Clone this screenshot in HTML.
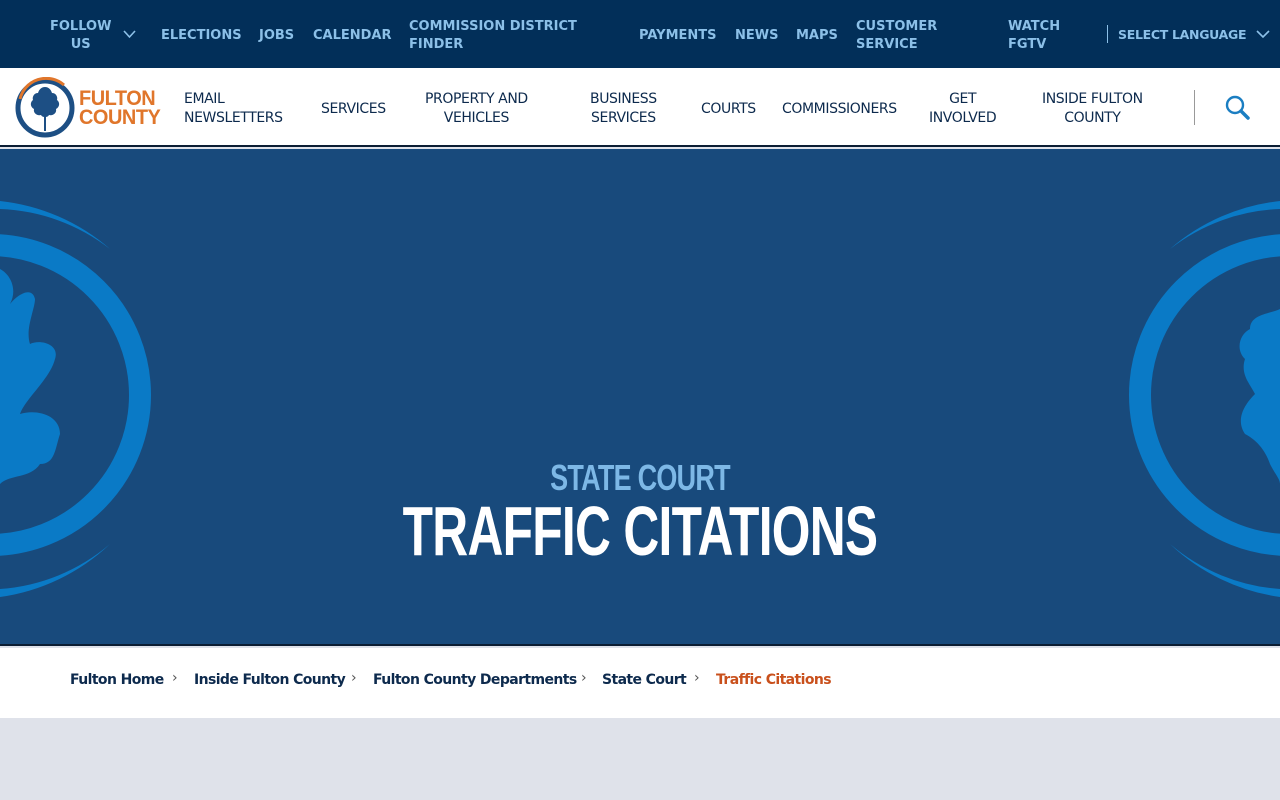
<!DOCTYPE html>
<html><head><meta charset="utf-8"><style>
*{margin:0;padding:0;box-sizing:border-box}
body{width:1280px;height:800px;overflow:hidden;background:#dfe2ea;font-family:"DejaVu Sans","Liberation Sans",sans-serif;position:relative}
.top{position:absolute;left:0;top:0;width:1280px;height:68px;background:#022f59}
.t{position:absolute;color:#8cc0e8;font-weight:bold;font-size:13px;letter-spacing:0;line-height:18px;margin-top:2px}
.nav{position:absolute;left:0;top:68px;width:1280px;height:79px;background:#fff;border-bottom:2px solid #0b1d33}
.n{position:absolute;color:#0d2a4d;font-size:14px;line-height:19px;text-align:center;letter-spacing:-.4px;margin-top:2px}
.hero{position:absolute;left:0;top:149px;width:1280px;height:497px;background:#184a7c;overflow:hidden;border-bottom:2px solid #0b1d33}
.bc{position:absolute;left:0;top:648px;width:1280px;height:70px;background:#fff}
.b{position:absolute;top:672px;font-size:14px;font-weight:bold;color:#0d2a4d;letter-spacing:-.6px}
.s{position:absolute;top:670px;color:#555;font-size:14px}
.h{position:absolute;left:0;width:1280px;text-align:center;font-family:"Liberation Sans",sans-serif;font-weight:bold}
</style></head><body>
<div class="top"></div>
<div class="t" style="left:50px;top:16px;text-align:center">FOLLOW<br>US</div>
<svg style="position:absolute;left:123px;top:30px" width="13" height="9"><path d="M1 1l5.5 6L12 1" stroke="#8cc0e8" stroke-width="1.6" fill="none"/></svg>
<div class="t" style="left:161px;top:25px">ELECTIONS</div>
<div class="t" style="left:259px;top:25px">JOBS</div>
<div class="t" style="left:313px;top:25px">CALENDAR</div>
<div class="t" style="left:409px;top:16px">COMMISSION DISTRICT<br>FINDER</div>
<div class="t" style="left:639px;top:25px">PAYMENTS</div>
<div class="t" style="left:735px;top:25px">NEWS</div>
<div class="t" style="left:796px;top:25px">MAPS</div>
<div class="t" style="left:856px;top:16px">CUSTOMER<br>SERVICE</div>
<div class="t" style="left:1008px;top:16px">WATCH<br>FGTV</div>
<div style="position:absolute;left:1107px;top:25px;width:1px;height:18px;background:#8cc0e8"></div>
<div class="t" style="left:1118px;top:24px;font-size:12.5px;letter-spacing:-.3px">SELECT LANGUAGE</div>
<svg style="position:absolute;left:1256px;top:30px" width="14" height="9"><path d="M1 1l6 6 6-6" stroke="#8cc0e8" stroke-width="1.6" fill="none"/></svg>

<div class="nav"></div>
<svg style="position:absolute;left:14px;top:77px" width="62" height="62" viewBox="0 0 62 62">
<circle cx="31" cy="31" r="27" fill="none" stroke="#1d4f84" stroke-width="5"/>
<path d="M6 22A27 27 0 0 1 50 8" stroke="#e0762b" stroke-width="3" fill="none"/>
<path d="M31 10c-4 0-6 3-7 6-4 0-6 4-5 7-3 2-3 7 1 9-1 4 3 7 7 6 1 2 3 2 4 2s3 0 4-2c4 1 8-2 7-6 4-2 4-7 1-9 1-3-1-7-5-7-1-3-3-6-7-6z" fill="#1d4f84"/>
<rect x="30" y="38" width="2" height="16" fill="#1d4f84"/>
</svg>
<div style="position:absolute;left:79px;top:89px;color:#e0762b;font-family:'Liberation Sans',sans-serif;font-weight:bold;font-size:21px;line-height:19px;letter-spacing:-.5px;transform:scaleX(.95);transform-origin:left">FULTON<br>COUNTY</div>
<div class="n" style="left:184px;top:88px;text-align:left">EMAIL<br>NEWSLETTERS</div>
<div class="n" style="left:321px;top:98px">SERVICES</div>
<div class="n" style="left:425px;top:88px">PROPERTY AND<br>VEHICLES</div>
<div class="n" style="left:590px;top:88px">BUSINESS<br>SERVICES</div>
<div class="n" style="left:701px;top:98px">COURTS</div>
<div class="n" style="left:782px;top:98px">COMMISSIONERS</div>
<div class="n" style="left:929px;top:88px">GET<br>INVOLVED</div>
<div class="n" style="left:1042px;top:88px">INSIDE FULTON<br>COUNTY</div>
<div style="position:absolute;left:1194px;top:90px;width:1px;height:35px;background:#999"></div>
<svg style="position:absolute;left:1225px;top:95px" width="26" height="26"><circle cx="10" cy="10" r="8" stroke="#1b7ec2" stroke-width="2.4" fill="none"/><path d="M16 16l7 7" stroke="#1b7ec2" stroke-width="3.5" stroke-linecap="round"/></svg>

<div class="hero">
<svg width="1280" height="497" style="position:absolute;left:0;top:0">
<g fill="#0a7ac6">
<circle cx="-10" cy="246" r="150" fill="none" stroke="#0a7ac6" stroke-width="22"/>
<path d="M0 52A200 200 0 0 1 110 100A190 190 0 0 0 0 60z"/>
<path d="M0 440A190 190 0 0 0 110 395A200 200 0 0 1 0 448z"/>
<path d="M0 120c10 5 18 20 10 35 8-10 22-18 25-5 0 10-10 30-5 45 10-5 30 0 25 15-5 20-30 40-35 55 15-5 40 0 40 20-5 15-5 30-20 30-10 15-30 10-40 20z"/>
<circle cx="1290" cy="246" r="150" fill="none" stroke="#0a7ac6" stroke-width="22"/>
<path d="M1280 52A200 200 0 0 0 1170 100A190 190 0 0 1 1280 60z"/>
<path d="M1280 440A190 190 0 0 1 1170 395A200 200 0 0 0 1280 448z"/>
<path d="M1280 160c-10 5-30 5-30 20-10 5-15 20-5 30-5 15 5 25 10 35-10 10-20 25-10 40 10 5 20 15 25 30 5 10 10 15 10 20z"/>
</g>
</svg>
</div>
<div class="h" style="top:457px;color:#7db8e6;font-size:36px;letter-spacing:-1px;transform:scaleX(.75)">STATE COURT</div>
<div class="h" style="top:491px;color:#fff;font-size:70px;letter-spacing:-1px;transform:scaleX(.71)">TRAFFIC CITATIONS</div>

<div class="bc"></div>
<div class="b" style="left:70px">Fulton Home</div>
<div class="s" style="left:172px">›</div>
<div class="b" style="left:194px">Inside Fulton County</div>
<div class="s" style="left:351px">›</div>
<div class="b" style="left:373px">Fulton County Departments</div>
<div class="s" style="left:581px">›</div>
<div class="b" style="left:602px">State Court</div>
<div class="s" style="left:694px">›</div>
<div class="b" style="left:716px;color:#c9501c">Traffic Citations</div>
</body></html>
